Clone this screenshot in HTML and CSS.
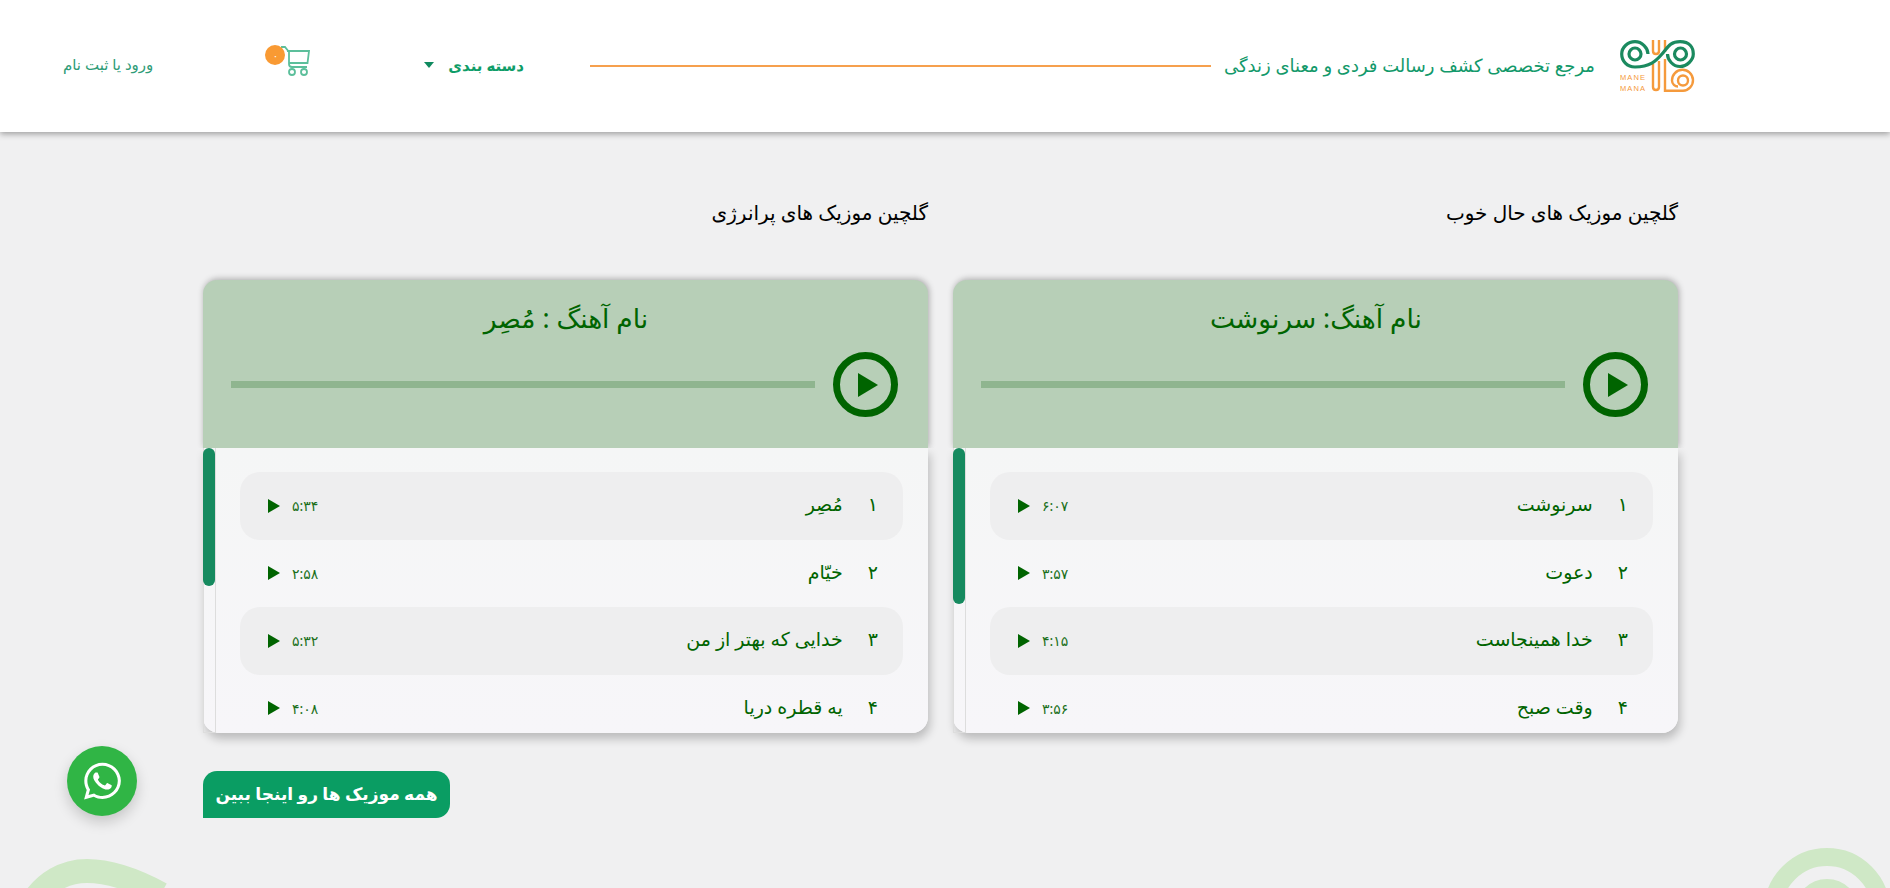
FILE: index.html
```html
<!DOCTYPE html>
<html lang="fa" dir="rtl">
<head>
  <meta charset="UTF-8" />
  <meta name="viewport" content="width=device-width, initial-scale=1.0"/>
  <title>مانه مانا</title>
  <link rel="stylesheet" href="styles.css">
</head>

<body>
  <header class="site-header">
    <svg class="logo" viewBox="0 0 75 52" fill="none">
      <g stroke="#f59a3c" stroke-width="2.400">
        <path d="M33 0V11C33 15 39 15 39 11V0"/>
        <path d="M45 0V12"/>
        <path d="M33 24V47C33 51 39 51 39 47V21"/>
        <path d="M45 19V50.800H63A10.500 10.500 0 1 0 52 40.500C52 44 55 46.500 58 46.500"/>
        <circle cx="63" cy="40.500" r="5"/>
      </g>
      <g stroke="#1b8a5f" stroke-width="3.200">
        <path d="M15 27C7 27 1.700 21 1.700 14S8 1.700 15 1.700 28 8 28 14"/>
        <circle cx="15" cy="14" r="6"/>
        <path d="M15 27C30 27 36 21 42 14S50 1.700 60 1.700 73.300 8 73.300 14 67 26.500 60 26.500 47.500 20 47.500 14"/>
        <circle cx="60.500" cy="14" r="6"/>
      </g>
      <text class="logo-text" x="0" y="40" textLength="25" lengthAdjust="spacing">MANE</text>
      <text class="logo-text" x="0" y="51" textLength="25" lengthAdjust="spacing">MANA</text>
    </svg>
    <p class="tagline">مرجع تخصصی کشف رسالت فردی و معنای زندگی</p>
    <span class="header-line"></span>
    <a class="category">دسته بندی <span class="caret"></span></a>
    <a class="cart">
      <svg class="cart-icon" viewBox="0 0 30 30" fill="none" stroke="#5cbf9b" stroke-width="1.800">
        <path d="M1 1H5L9 6V18C9 20 10 21 12 21H27"/>
        <path d="M7 5H29L27.500 17H9"/>
        <circle cx="12" cy="26" r="3"/>
        <circle cx="24" cy="26" r="3"/>
      </svg>
      <span class="cart-count">۰</span>
    </a>
    <a class="login">ورود یا ثبت نام</a>
  </header>

  <main class="music">
    <section class="column">
      <h2 class="column-title">گلچین موزیک های حال خوب</h2>
      <div class="card">
        <div class="card-head">
          <h3 class="song-name">نام آهنگ: سرنوشت</h3>
          <div class="player">
            <button class="big-play"><span class="tri-big"></span></button>
            <div class="progress"></div>
          </div>
        </div>
        <div class="list-wrap">
          <ul class="list">
            <li class="row"><span class="num">۱</span><span class="name">سرنوشت</span><span class="time">۶:۰۷</span><span class="tri"></span></li>
            <li class="row"><span class="num">۲</span><span class="name">دعوت</span><span class="time">۳:۵۷</span><span class="tri"></span></li>
            <li class="row"><span class="num">۳</span><span class="name">خدا همینجاست</span><span class="time">۴:۱۵</span><span class="tri"></span></li>
            <li class="row"><span class="num">۴</span><span class="name">وقت صبح</span><span class="time">۳:۵۶</span><span class="tri"></span></li>
          </ul>
          <div class="track"><div class="thumb thumb-long"></div></div>
        </div>
      </div>
    </section>

    <section class="column">
      <h2 class="column-title">گلچین موزیک های پرانرژی</h2>
      <div class="card">
        <div class="card-head">
          <h3 class="song-name">نام آهنگ : مُصِر</h3>
          <div class="player">
            <button class="big-play"><span class="tri-big"></span></button>
            <div class="progress"></div>
          </div>
        </div>
        <div class="list-wrap">
          <ul class="list">
            <li class="row"><span class="num">۱</span><span class="name">مُصِر</span><span class="time">۵:۳۴</span><span class="tri"></span></li>
            <li class="row"><span class="num">۲</span><span class="name">خیّام</span><span class="time">۲:۵۸</span><span class="tri"></span></li>
            <li class="row"><span class="num">۳</span><span class="name">خدایی که بهتر از من</span><span class="time">۵:۳۲</span><span class="tri"></span></li>
            <li class="row"><span class="num">۴</span><span class="name">یه قطره دریا</span><span class="time">۴:۰۸</span><span class="tri"></span></li>
          </ul>
          <div class="track"><div class="thumb"></div></div>
        </div>
      </div>
      <a class="all-music">همه موزیک ها رو اینجا ببین</a>
    </section>
  </main>

  <a class="whatsapp">
    <svg viewBox="0 0 448 512" fill="#fff"><path d="M380.900 97.100C339 55.100 283.200 32 223.900 32c-122.400 0-222 99.600-222 222 0 39.100 10.200 77.300 29.600 111L0 480l117.700-30.900c32.400 17.700 68.900 27 106.100 27h.1c122.300 0 224.100-99.600 224.100-222 0-59.300-25.200-115-67.100-157zm-157 341.600c-33.200 0-65.700-8.900-94-25.700l-6.700-4-69.800 18.300L72 359.200l-4.400-7c-18.500-29.400-28.200-63.300-28.200-98.200 0-101.700 82.800-184.500 184.600-184.500 49.300 0 95.600 19.200 130.400 54.100 34.800 34.900 56.200 81.200 56.100 130.500 0 101.800-84.900 184.600-186.600 184.600zm101.200-138.200c-5.500-2.800-32.800-16.200-37.900-18-5.100-1.900-8.800-2.800-12.500 2.800-3.700 5.600-14.300 18-17.600 21.800-3.200 3.700-6.500 4.200-12 1.400-32.600-16.300-54-29.100-75.500-66-5.700-9.800 5.700-9.100 16.300-30.300 1.800-3.700.9-6.900-.5-9.700-1.400-2.800-12.500-30.100-17.100-41.200-4.500-10.800-9.100-9.300-12.500-9.500-3.200-.2-6.900-.2-10.600-.2-3.700 0-9.700 1.400-14.800 6.900-5.100 5.600-19.400 19-19.400 46.300 0 27.300 19.900 53.700 22.600 57.400 2.800 3.700 39.100 59.700 94.800 83.800 35.200 15.200 49 16.500 66.600 13.900 10.700-1.600 32.800-13.400 37.400-26.400 4.600-13 4.600-24.100 3.200-26.400-1.300-2.500-5-3.900-10.500-6.600z"/></svg>
  </a>

  <!-- background swirls at the bottom corners -->
  <svg class="swirl swirl-left" viewBox="0 0 180 40" fill="none" stroke="#cfe8c6" stroke-width="24">
    <path d="M26 56C40 34 60 23 82 23 106 23 132 33 156 46"/>
  </svg>
  <svg class="swirl swirl-right" viewBox="0 0 122 40" fill="none" stroke="#cfe8c6">
    <circle cx="61" cy="63" r="54" stroke-width="18"/>
    <circle cx="61" cy="63" r="24" stroke-width="16"/>
  </svg>
</body>
</html>
```

FILE: styles.css
```css
* { box-sizing: border-box; margin: 0; padding: 0; }
html, body { height: 100%; }
body {
  font-family: 'Noto Sans', 'DejaVu Sans', sans-serif;
  background: #f0f0f1;
  color: #006400;
  min-height: 100vh;
  overflow: hidden;
  position: relative;
}
a { text-decoration: none; }
ul { list-style: none; }

/* header */
.site-header {
  height: 132px;
  background: #fff;
  box-shadow: 0 2px 6px rgba(0,0,0,0.35);
  display: flex; align-items: center;
  padding: 0 195px 0 63px;
}
.logo { width: 75px; height: 52px; flex: none; direction: ltr; margin-top: -1px; }
.logo-text { font-family: 'Liberation Sans', sans-serif; font-size: 7.5px; fill: #f59a3c; }
.tagline { font-size: 18px; color: #12996a; margin: -2px 25px 0 0; white-space: nowrap; }
.header-line { flex: 1; height: 2px; background: #f6a04d; margin: 0 13px 0 66px; }
.category {
  display: flex; align-items: center; gap: 14px; margin-top: -2px;
  font-size: 15px; font-weight: 700; color: #0f9d68; white-space: nowrap;
}
.caret {
  width: 0; height: 0;
  border-left: 5px solid transparent; border-right: 5px solid transparent;
  border-top: 6px solid #0f8a5f;
}
.cart { position: relative; width: 45px; height: 30px; margin: -11px 114px 0 112px; }
.cart-icon { width: 30px; height: 30px; position: absolute; right: 0; top: 0; }
.cart-count {
  position: absolute; left: 0; top: -1px;
  width: 20px; height: 20px; border-radius: 50%;
  background: #f99a33; color: #fff;
  font-size: 10px; text-align: center; line-height: 20px;
}
.login { font-size: 15px; color: #2f9c78; white-space: nowrap; margin-top: -4px; }

/* music columns */
.music {
  display: grid; grid-template-columns: 725px 725px; gap: 25px;
  padding: 0 212px 0 203px;
}
.column-title {
  font-size: 20px; font-weight: 500; color: #000;
  height: 148px; padding-top: 67px; line-height: 28px;
}
.card-head {
  position: relative; z-index: 1;
  height: 168px; background: #b7cfb7;
  border-radius: 14px 14px 0 0;
  box-shadow: 1px -1px 6px rgba(0,0,0,0.3);
  clip-path: inset(-10px -10px 0 -10px);
  padding: 20px 30px 0 28px;
}
.song-name { font-size: 26.5px; font-weight: 400; text-align: center; line-height: 36px; padding-left: 3px; }
.player { display: flex; align-items: center; gap: 18px; margin-top: 16px; }
.big-play {
  width: 65px; height: 65px; flex: none;
  border: 7px solid #006400; border-radius: 50%; background: transparent;
  display: flex; align-items: center; justify-content: center;
}
.tri-big {
  width: 0; height: 0; margin-left: 4px;
  border-top: 12px solid transparent; border-bottom: 12px solid transparent;
  border-left: 20px solid #006400;
}
.progress { flex: 1; height: 7px; background: #8fb58f; }

.list-wrap { position: relative; height: 285px; }
.list {
  height: 285px; overflow: hidden;
  background: linear-gradient(#f5f6f6, #f7f6f9);
  border-radius: 0 0 16px 16px;
  box-shadow: 2px 6px 10px rgba(0,0,0,0.22);
  padding: 24px 25px 0 37px;
}
.row {
  height: 67.5px; display: flex; align-items: center;
  padding: 0 25px 0 28px;
  border-radius: 20px;
  font-size: 19px;
}
.row:nth-child(odd) { background: #eeeeef; }
.num { margin: -3px 0 0 25px; }
.name { flex: 1; margin-top: -3px; }
.time { font-size: 14px; margin-left: 12px; color: #1b701b; }
.tri {
  width: 0; height: 0;
  border-top: 7.5px solid transparent; border-bottom: 7.5px solid transparent;
  border-left: 12px solid #006400;
}
/* scrollbar of the playlist */
.track {
  position: absolute; left: 0; top: 0; bottom: 0; width: 13px;
  border-left: 1px solid #ddd; border-right: 1px solid #ddd; border-bottom: 1px solid #ddd;
}
.thumb {
  position: absolute; left: -1px; top: 0; width: 12px; height: 138px;
  background: #168a5f; border-radius: 6px;
}
.thumb-long { height: 156px; }

.all-music {
  display: inline-block; margin-top: 38px;
  float: left;
  width: 247px; height: 47px;
  background: #0a9d63; color: #fff;
  border-radius: 14px 14px 14px 0;
  font-size: 17px; font-weight: 700; text-align: center; line-height: 45px;
  white-space: nowrap;
}

/* floating whatsapp button */
.whatsapp {
  position: fixed; left: 67px; bottom: 72px;
  width: 70px; height: 70px; border-radius: 50%;
  background: #30b545;
  box-shadow: 0 6px 14px rgba(0,0,0,0.18);
  display: flex; align-items: center; justify-content: center;
}
.whatsapp svg { width: 37px; height: 42px; }

.swirl { position: absolute; bottom: 0; }
.swirl-left { left: 5px; width: 180px; height: 40px; }
.swirl-right { left: 1766px; width: 122px; height: 40px; }
```
